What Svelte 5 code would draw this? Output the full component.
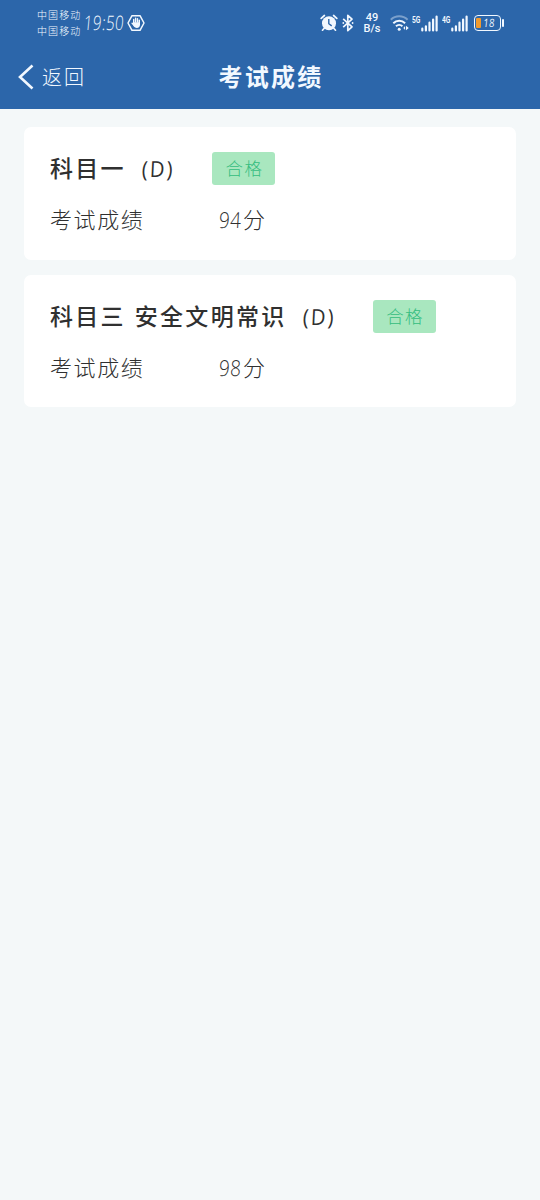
<script lang="ts">
    const title = "考试成绩";
    const carriers = ["中国移动", "中国移动"];
    const networks = ["5G", "4G"];
    const results = [
        { subject: "科目一", type: "(D)", status: "合格", score: 94 },
        { subject: "科目三 安全文明常识", type: "(D)", status: "合格", score: 98 },
    ];
</script>

<div class="screen">
    <header>
        <div class="status">
            <div class="carriers">
                {#each carriers as carrier}
                    <span>{carrier}</span>
                {/each}
            </div>
            <span class="time">19:50</span>
            <svg class="hand" width="18" height="18" viewBox="0 0 18 18">
                <path d="M5 1.7h8L17 9l-4 7.3H5L1 9z" fill="none" stroke="currentColor" stroke-width="1.5" stroke-linejoin="round"/>
                <path d="M6.7 9V5.4M8.6 8V4.3M10.5 8V4.7M12.3 9V6.1M5.1 9.2l2.2 2.2" fill="none" stroke="currentColor" stroke-width="1.4" stroke-linecap="round"/>
                <path d="M6 8.3h7v2.4c0 2-1.2 3.2-3.2 3.2-1.6 0-2.5-.8-3.4-2.2z" fill="currentColor"/>
            </svg>

            <svg class="alarm" width="18" height="18" viewBox="0 0 18 18">
                <path d="M1.2 4.4 4.4 1.5M16.8 4.4l-3.2-2.9M4 14.5l-1.5 1.7M14 14.5l1.5 1.7" stroke="currentColor" stroke-width="1.7" stroke-linecap="round"/>
                <circle cx="9" cy="9.2" r="7" fill="currentColor"/>
                <path d="M8.8 5v4.7l2.9 2.2" fill="none" stroke="#2c66aa" stroke-width="1.4"/>
            </svg>
            <svg class="bluetooth" width="12" height="18" viewBox="0 0 12 18">
                <path d="m1.2 4.8 8.8 8-4.2 3.9V1.3L10 5.2l-8.8 8" fill="none" stroke="currentColor" stroke-width="1.7" stroke-linejoin="round"/>
                <circle cx="1.3" cy="9" r=".9" fill="currentColor"/>
                <circle cx="10.6" cy="9" r=".9" fill="currentColor"/>
            </svg>
            <div class="speed">
                <span>49</span>
                <span>B/s</span>
            </div>
            <svg class="wifi" width="20" height="18" viewBox="0 0 20 18">
                <g fill="none" stroke="currentColor" stroke-width="2">
                    <path d="M.8 5.8a12 12 0 0 1 16.8 0" opacity=".4"/>
                    <path d="M3.3 9.2a8.5 8.5 0 0 1 11.8 0"/>
                    <path d="M6 12.3a4.7 4.7 0 0 1 6.4 0"/>
                </g>
                <circle cx="9.2" cy="15.2" r="1.5" fill="currentColor"/>
                <path d="m13.3 14 1.8-2v4zM18.8 14 16 11.8v4.4z" fill="currentColor"/>
            </svg>
            {#each networks as network}
                <div class="network">
                    <span>{network}</span>
                    <svg width="17" height="17" viewBox="0 0 17 17">
                        <path d="M1.3 13.7V15.5M4.9 11.3V15.5M8.5 7.7V15.5M12.1 4.5V15.5M15.6 1.5V15.5" stroke="currentColor" stroke-width="2.2" stroke-linecap="round"/>
                    </svg>
                </div>
            {/each}
            <div class="battery">
                <i class="level"></i>
                <span>18</span>
            </div>
            <i class="cap"></i>
        </div>

        <nav>
            <button class="back">
                <svg width="16" height="26" viewBox="0 0 16 26">
                    <path d="M14.5 1.5 2 13l12.5 11.5" fill="none" stroke="currentColor" stroke-width="2.6"/>
                </svg>
                <span>返回</span>
            </button>
            <h1>{title}</h1>
        </nav>
    </header>

    <main>
        {#each results as result}
            <section class="card">
                <div class="heading">
                    <h2>{result.subject}</h2>
                    <span class="type">{result.type}</span>
                    <span class="badge">{result.status}</span>
                </div>
                <div class="row">
                    <span class="label">考试成绩</span>
                    <span class="score"><span class="number">{result.score}</span>分</span>
                </div>
            </section>
        {/each}
    </main>
</div>

<style>
    :global(body) {
        background: #f4f8f9;
    }

    .screen {
        min-height: 1200px;
        background: #f4f8f9;
        color: #303030;
        font-family: "Noto Sans CJK SC", sans-serif;
        font-weight: 300;
        white-space: nowrap;
    }

    header {
        height: 109px;
        background: #2c66aa;
        color: #f2f8ff;
    }

    .status {
        display: flex;
        align-items: center;
        height: 46px;
        padding-left: 37px;
        box-sizing: border-box;
    }

    .status svg {
        flex: none;
    }

    .carriers {
        display: flex;
        flex-direction: column;
        width: 47px;
        font-size: 10px;
        line-height: 16px;
        letter-spacing: 1.1px;
    }

    .time {
        width: 43px;
        font: 300 20px/24px "Open Sans", sans-serif;
        letter-spacing: 0.6px;
        transform: scaleX(0.75) skewX(-7deg);
        transform-origin: 0 50%;
    }

    .alarm {
        margin-left: 175px;
    }

    .bluetooth {
        margin-left: 4px;
    }

    .speed {
        display: flex;
        flex-direction: column;
        width: 22px;
        margin-left: 7px;
        font: 500 11px/11px Roboto, sans-serif;
        text-align: center;
    }

    .speed span {
        height: 11px;
    }

    .wifi {
        margin-left: 7px;
    }

    .network {
        display: flex;
        align-items: flex-start;
        width: 26px;
        margin-left: 2px;
    }

    .network + .network {
        margin-left: 4px;
    }

    .network span {
        width: 9px;
        font: bold 9.5px/10px Roboto, sans-serif;
        transform: scaleX(0.7);
        transform-origin: 0 50%;
    }

    .battery {
        display: flex;
        align-items: center;
        width: 27px;
        height: 16px;
        margin-left: 6px;
        padding-left: 1px;
        box-sizing: border-box;
        border: 1.8px solid currentColor;
        border-radius: 4px;
    }

    .level {
        width: 5px;
        height: 10px;
        border-radius: 1px;
        background: #f09a2d;
    }

    .battery span {
        margin-left: 1px;
        font: 11.5px/12px "Open Sans", sans-serif;
        letter-spacing: 0.5px;
        transform: scaleX(0.8) skewX(-8deg);
    }

    .cap {
        width: 2px;
        height: 8px;
        margin-left: 1px;
        border-radius: 1px;
        background: currentColor;
    }

    nav {
        display: grid;
        grid-template-columns: 1fr auto 1fr;
        align-items: center;
        height: 61px;
    }

    .back {
        display: flex;
        align-items: center;
        gap: 8px;
        padding: 0 0 0 18px;
        border: 0;
        background: none;
        color: inherit;
        font: inherit;
        font-size: 20px;
        line-height: 30px;
        letter-spacing: 2px;
    }

    h1 {
        margin: 0;
        padding: 0 0 2px 2px;
        font-size: 24px;
        font-weight: 700;
        line-height: 36px;
        letter-spacing: 2.2px;
    }

    main {
        display: flex;
        flex-direction: column;
        gap: 15px;
        padding: 18px 24px;
    }

    .card {
        height: 133px;
        padding: 25px 26px 0;
        box-sizing: border-box;
        border-radius: 7px;
        background: #fff;
    }

    .card + .card {
        height: 132px;
    }

    .heading {
        display: flex;
        align-items: center;
        height: 33px;
    }

    h2 {
        margin: 0;
        font-size: 23px;
        font-weight: 500;
        line-height: 33px;
        letter-spacing: 2.3px;
        word-spacing: 1.4px;
        padding-bottom: 2px;
    }

    .type {
        width: 32px;
        margin-left: 16px;
        font: 500 22px/33px "Open Sans", sans-serif;
        letter-spacing: 2.2px;
        transform: scaleX(0.92) skewX(-3deg);
        transform-origin: 0 50%;
    }

    .badge {
        width: 63px;
        height: 33px;
        margin-left: 38px;
        padding-left: 2px;
        box-sizing: border-box;
        border-radius: 3px;
        background: #a9e7bf;
        color: #35bd80;
        font-size: 17.5px;
        line-height: 32px;
        letter-spacing: 1.4px;
        text-align: center;
    }

    .row {
        display: flex;
        margin-top: 17px;
        font-size: 22px;
        line-height: 33px;
    }

    .label {
        width: 169px;
        letter-spacing: 1.6px;
    }

    .number {
        display: inline-block;
        width: 24px;
        font: 300 22px/33px "Open Sans", sans-serif;
        letter-spacing: 0.6px;
        transform: scaleX(0.86) skewX(-4deg);
        transform-origin: 0 50%;
    }
</style>
